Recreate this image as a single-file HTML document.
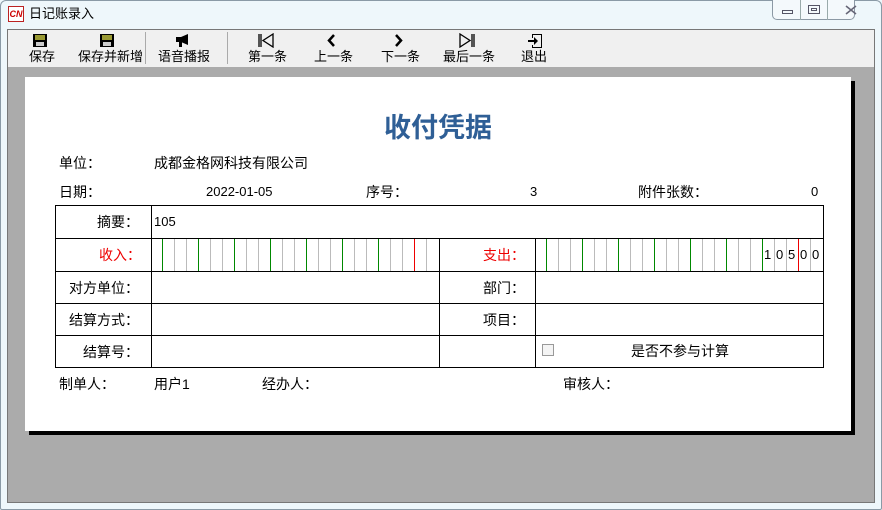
<!DOCTYPE html>
<html><head><meta charset="utf-8"><style>
*{margin:0;padding:0;box-sizing:border-box}
body{width:882px;height:510px;background:#eef7fb;font-family:"Liberation Sans","Noto Sans CJK SC",sans-serif;position:relative;overflow:hidden;font-size:13px;color:#000}
.a{position:absolute}
.t{position:absolute;white-space:nowrap;line-height:16px}
.v{position:absolute;top:0;height:100%;width:1px}
</style></head><body>
<div class="a" style="left:0;top:0;width:882px;height:510px;border:1px solid #8a9aa6;border-radius:6px 6px 2px 2px;background:#eef7fb"></div>
<div class="a" style="left:8px;top:6px;width:16px;height:16px;border:1px solid #b22;background:#fff;color:#c00;font-size:9px;font-weight:bold;font-style:italic;line-height:14px;text-align:center">CN</div>
<div class="t" style="left:29px;top:6px;font-size:13px">日记账录入</div>
<div class="a" style="left:772px;top:0;width:83px;height:20px;border:1px solid #8c99a5;border-top:none;border-radius:0 0 5px 5px;background:#f4f9fc"></div>
<div class="a" style="left:800px;top:0;width:1px;height:20px;background:#9aa"></div>
<div class="a" style="left:827px;top:0;width:1px;height:20px;background:#9aa"></div>
<div class="a" style="left:782px;top:10px;width:11px;height:4px;border:1px solid #556"></div>
<div class="a" style="left:808px;top:5px;width:12px;height:9px;border:1px solid #556"></div>
<div class="a" style="left:811px;top:8px;width:6px;height:3px;border:1px solid #556"></div>
<svg class="a" style="left:845px;top:5px" width="12" height="10" fill="none" stroke="#667" stroke-width="1.6"><path d="M1 1l10 8M11 1L1 9"/></svg>
<!-- client -->
<div class="a" style="left:7px;top:29px;width:868px;height:474px;border:1px solid #777;background:#ababab"></div>
<div class="a" style="left:8px;top:30px;width:866px;height:37px;background:#f0f0f0"></div>
<div class="a" style="left:145px;top:32px;width:1px;height:32px;background:#aaa"></div>
<div class="a" style="left:227px;top:32px;width:1px;height:32px;background:#aaa"></div>
<!-- icons -->
<svg class="a" style="left:33px;top:34px" width="14" height="13"><rect x="0" y="0" width="14" height="13" fill="#000"/><rect x="2" y="1" width="10" height="5" fill="#993"/><rect x="3" y="8" width="8" height="4" fill="#ccc"/></svg>
<svg class="a" style="left:100px;top:34px" width="14" height="13"><rect x="0" y="0" width="14" height="13" fill="#000"/><rect x="2" y="1" width="10" height="5" fill="#993"/><rect x="3" y="8" width="8" height="4" fill="#ccc"/></svg>
<svg class="a" style="left:175px;top:34px" width="16" height="14"><path d="M1 3h5l7-3v11l-7-3H1z" fill="#000"/><rect x="4" y="8" width="3" height="5" fill="#000"/></svg>
<svg class="a" style="left:257px;top:33px" width="18" height="15" fill="none" stroke="#000" stroke-width="1.3"><path d="M2 1v13M4 1v13M16 1L6 7.5 16 14z"/></svg>
<svg class="a" style="left:326px;top:34px" width="10" height="13" fill="none" stroke="#000" stroke-width="2.5"><path d="M8 1L3 6.5 8 12"/></svg>
<svg class="a" style="left:394px;top:34px" width="10" height="13" fill="none" stroke="#000" stroke-width="2.5"><path d="M2 1l5 5.5L2 12"/></svg>
<svg class="a" style="left:458px;top:33px" width="18" height="15" fill="none" stroke="#000" stroke-width="1.3"><path d="M2 1L12 7.5 2 14zM14 1v13M16 1v13"/></svg>
<svg class="a" style="left:527px;top:33px" width="16" height="16"><path d="M5 1h10v14H5v-3h1v2h8V2H6v3H5z" fill="#000"/><path d="M1 7h6V4l4 4-4 4V9H1z" fill="#000"/></svg>
<div class="t" style="left:29px;top:49px">保存</div>
<div class="t" style="left:78px;top:49px">保存并新增</div>
<div class="t" style="left:158px;top:49px">语音播报</div>
<div class="t" style="left:248px;top:49px">第一条</div>
<div class="t" style="left:314px;top:49px">上一条</div>
<div class="t" style="left:381px;top:49px">下一条</div>
<div class="t" style="left:443px;top:49px">最后一条</div>
<div class="t" style="left:521px;top:49px">退出</div>
<!-- paper -->
<div class="a" style="left:29px;top:81px;width:826px;height:354px;background:#000"></div>
<div class="a" style="left:25px;top:77px;width:826px;height:354px;background:#fff"></div>
<div class="t" style="left:384px;top:113px;font-size:27px;line-height:30px;font-weight:bold;color:#2f5f96">收付凭据</div>
<div class="t" style="left:59px;top:155px;font-size:14px">单位：</div>
<div class="t" style="left:154px;top:155px;font-size:14px">成都金格网科技有限公司</div>
<div class="t" style="left:59px;top:184px;font-size:14px">日期：</div>
<div class="t" style="left:206px;top:184px;font-size:13px">2022-01-05</div>
<div class="t" style="left:366px;top:184px;font-size:14px">序号：</div>
<div class="t" style="left:530px;top:184px;font-size:13px">3</div>
<div class="t" style="left:638px;top:184px;font-size:14px">附件张数：</div>
<div class="t" style="left:811px;top:184px;font-size:13px">0</div>
<!-- table -->
<div class="a" style="left:55px;top:205px;width:769px;height:163px;border:1px solid #000"></div>
<div class="a" style="left:55px;top:238px;width:769px;height:1px;background:#000"></div>
<div class="a" style="left:55px;top:271px;width:769px;height:1px;background:#000"></div>
<div class="a" style="left:55px;top:303px;width:769px;height:1px;background:#000"></div>
<div class="a" style="left:55px;top:335px;width:769px;height:1px;background:#000"></div>
<div class="a" style="left:151px;top:205px;width:1px;height:163px;background:#000"></div>
<div class="a" style="left:439px;top:238px;width:1px;height:130px;background:#000"></div>
<div class="a" style="left:535px;top:238px;width:1px;height:130px;background:#000"></div>
<div class="a" id="g1" style="left:152px;top:239px;width:287px;height:32px"></div>
<div class="a" id="g2" style="left:536px;top:239px;width:287px;height:32px"></div>
<div class="t" style="left:97px;top:214px;font-size:14px">摘要：</div>
<div class="t" style="left:154px;top:214px;font-size:13px">105</div>
<div class="t" style="left:99px;top:247px;font-size:14px;color:#e00">收入：</div>
<div class="t" style="left:483px;top:247px;font-size:14px;color:#e00">支出：</div>
<div class="t" style="left:69px;top:280px;font-size:14px">对方单位：</div>
<div class="t" style="left:483px;top:280px;font-size:14px">部门：</div>
<div class="t" style="left:69px;top:312px;font-size:14px">结算方式：</div>
<div class="t" style="left:483px;top:312px;font-size:14px">项目：</div>
<div class="t" style="left:83px;top:344px;font-size:14px">结算号：</div>
<div class="a" style="left:542px;top:344px;width:12px;height:12px;border:1px solid #999;background:#f4f4f4"></div>
<div class="t" style="left:631px;top:343px;font-size:14px">是否不参与计算</div>
<div class="t" style="left:59px;top:376px;font-size:14px">制单人：</div>
<div class="t" style="left:154px;top:376px;font-size:14px">用户1</div>
<div class="t" style="left:262px;top:376px;font-size:14px">经办人：</div>
<div class="t" style="left:563px;top:376px;font-size:14px">审核人：</div>
<script>
function grid(id,digits){var g=document.getElementById(id),h='';for(var i=0;i<23;i++){var x=10+i*12;var c=(i==21)?'#e00':(i%3==0?'#080':'#bbb');h+='<div class="v" style="left:'+x+'px;background:'+c+'"></div>';}
for(var j=0;j<digits.length;j++){var x=10+(23-digits.length+j)*12;h+='<div class="t" style="left:'+(x+2)+'px;top:8px;font-size:13px">'+digits[j]+'</div>';}
g.innerHTML=h;}
grid('g1','');grid('g2','10500');
</script>
</body></html>
